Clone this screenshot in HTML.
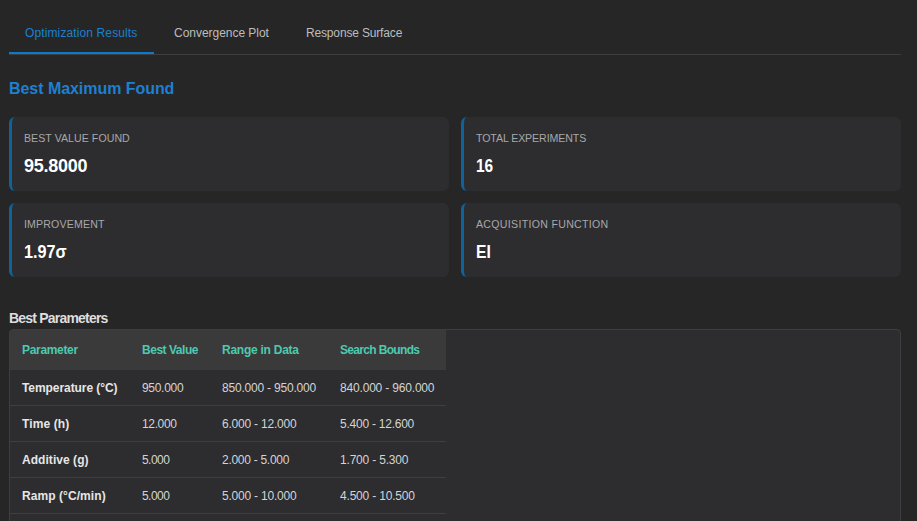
<!DOCTYPE html>
<html>
<head>
<meta charset="utf-8">
<style>
html,body{margin:0;padding:0;}
body{width:917px;height:521px;overflow:hidden;background:#262626;font-family:"Liberation Sans",sans-serif;position:relative;}
.t{position:absolute;white-space:nowrap;line-height:1;}
.tabline{position:absolute;left:9px;top:54px;width:892px;height:1px;background:#3e3e42;}
.tabact{position:absolute;left:9px;top:52px;width:145px;height:2px;background:#0b7bc9;}
.tab{font-size:12px;color:#bdbdbd;}
.tab.a{color:#1a80d2;}
.h{font-size:16px;font-weight:bold;color:#1f7fd0;}
.card{position:absolute;width:440px;height:74px;background:#2d2d30;border-left:3px solid #0e639c;border-radius:6px;box-sizing:border-box;}
.lbl{font-size:10.6px;color:#a8a8a8;}
.val{font-size:18px;font-weight:bold;color:#ffffff;}
.bp{font-size:14px;font-weight:bold;color:#dedede;}
.tbl{position:absolute;left:9px;top:329px;width:892px;height:220px;box-sizing:border-box;border:1px solid #3e3e42;border-radius:4px;background:#2d2d30;}
.hdr{position:absolute;left:10px;top:330px;width:436px;height:40px;background:#3a3a3a;}
.rb{position:absolute;left:10px;width:436px;height:1px;background:#3e3e42;}
.th{font-size:12px;font-weight:bold;color:#4ec9b0;}
.td0{font-size:12px;font-weight:bold;color:#e6e6e6;}
.td{font-size:12px;color:#d4d4d4;}
</style>
</head>
<body>
<div class="tabline"></div>
<div class="tabact"></div>
<div class="t tab a" style="left:25px;top:27px;letter-spacing:0.12px">Optimization Results</div>
<div class="t tab" style="left:174px;top:27px;letter-spacing:-0.03px">Convergence Plot</div>
<div class="t tab" style="left:306px;top:27px;letter-spacing:-0.16px">Response Surface</div>

<div class="t h" style="left:9px;top:81px;letter-spacing:-0.05px">Best Maximum Found</div>

<div class="card" style="left:9px;top:117px;"></div>
<div class="card" style="left:461px;top:117px;"></div>
<div class="card" style="left:9px;top:203px;"></div>
<div class="card" style="left:461px;top:203px;"></div>

<div class="t lbl" style="left:24px;top:133px;letter-spacing:0.05px">BEST VALUE FOUND</div>
<div class="t val" style="left:24px;top:157px;letter-spacing:-0.25px">95.8000</div>
<div class="t lbl" style="left:476px;top:133px;letter-spacing:-0.09px">TOTAL EXPERIMENTS</div>
<div class="t val" style="left:476px;top:157px;transform:scaleX(0.86);transform-origin:0 0">16</div>
<div class="t lbl" style="left:24px;top:219px;letter-spacing:0.16px">IMPROVEMENT</div>
<div class="t val" style="left:24px;top:243px;transform:scaleX(0.9);transform-origin:0 0">1.97σ</div>
<div class="t lbl" style="left:476px;top:219px;letter-spacing:0.3px">ACQUISITION FUNCTION</div>
<div class="t val" style="left:476px;top:243px;transform:scaleX(0.87);transform-origin:0 0">EI</div>

<div class="t bp" style="left:9px;top:311px;letter-spacing:-0.8px">Best Parameters</div>
<div class="tbl"></div>
<div class="hdr"></div>
<div class="rb" style="top:405px;"></div>
<div class="rb" style="top:441px;"></div>
<div class="rb" style="top:477px;"></div>
<div class="rb" style="top:513px;"></div>

<div class="t th" style="left:22px;top:344px;letter-spacing:-0.32px">Parameter</div>
<div class="t th" style="left:142px;top:344px;letter-spacing:-0.47px">Best Value</div>
<div class="t th" style="left:222px;top:344px;letter-spacing:-0.25px">Range in Data</div>
<div class="t th" style="left:340px;top:344px;letter-spacing:-0.67px">Search Bounds</div>

<div class="t td0" style="left:22px;top:382px;letter-spacing:-0.07px">Temperature (°C)</div>
<div class="t td" style="left:142px;top:382px;letter-spacing:-0.3px">950.000</div>
<div class="t td" style="left:222px;top:382px;letter-spacing:-0.2px">850.000 - 950.000</div>
<div class="t td" style="left:340px;top:382px;letter-spacing:-0.18px">840.000 - 960.000</div>

<div class="t td0" style="left:22px;top:418px;letter-spacing:0.11px">Time (h)</div>
<div class="t td" style="left:142px;top:418px;letter-spacing:-0.36px">12.000</div>
<div class="t td" style="left:222px;top:418px;letter-spacing:-0.21px">6.000 - 12.000</div>
<div class="t td" style="left:340px;top:418px;letter-spacing:-0.24px">5.400 - 12.600</div>

<div class="t td0" style="left:22px;top:454px;letter-spacing:0.05px">Additive (g)</div>
<div class="t td" style="left:142px;top:454px;letter-spacing:-0.55px">5.000</div>
<div class="t td" style="left:222px;top:454px;letter-spacing:-0.28px">2.000 - 5.000</div>
<div class="t td" style="left:340px;top:454px;letter-spacing:-0.19px">1.700 - 5.300</div>

<div class="t td0" style="left:22px;top:490px;letter-spacing:0.07px">Ramp (°C/min)</div>
<div class="t td" style="left:142px;top:490px;letter-spacing:-0.55px">5.000</div>
<div class="t td" style="left:222px;top:490px;letter-spacing:-0.21px">5.000 - 10.000</div>
<div class="t td" style="left:340px;top:490px;letter-spacing:-0.19px">4.500 - 10.500</div>
</body>
</html>
